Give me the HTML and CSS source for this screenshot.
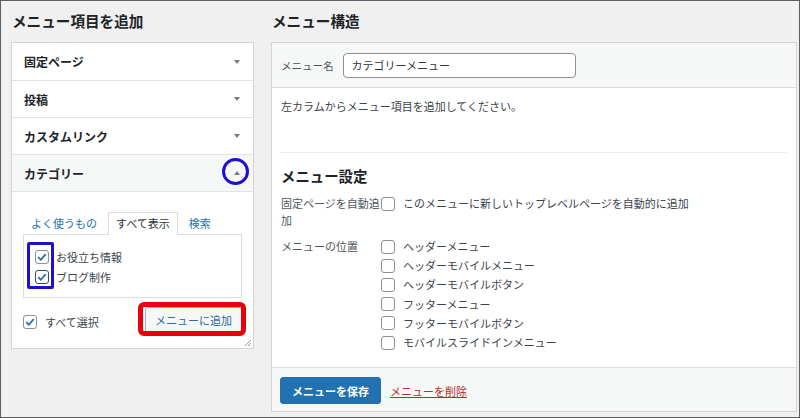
FILE: index.html
```html
<!DOCTYPE html>
<html lang="ja">
<head>
<meta charset="utf-8">
<title>メニュー</title>
<link rel="stylesheet" href="styles.css">
</head>
<body>
<div class="frame">
  <div class="col left">
    <h2 class="title">メニュー項目を追加</h2>
    <div class="acc">
      <div class="acc-row"><span>固定ページ</span><i class="arrow down"></i></div>
      <div class="acc-row"><span>投稿</span><i class="arrow down"></i></div>
      <div class="acc-row"><span>カスタムリンク</span><i class="arrow down"></i></div>
      <div class="acc-row open"><span>カテゴリー</span><i class="arrow up"></i><span class="mark-circle"></span></div>
      <div class="acc-body">
        <div class="tabs">
          <span class="tab">よく使うもの</span>
          <span class="tab active">すべて表示</span>
          <span class="tab">検索</span>
        </div>
        <div class="panel">
          <label class="chk-row"><span class="cb"><svg viewBox="0 0 14 14" width="12" height="12"><path d="M2.5 7.2 L5.6 10.2 L11.3 3.6" fill="none" stroke="#2271b1" stroke-width="2.1"/></svg></span>お役立ち情報</label>
          <label class="chk-row"><span class="cb focus"><svg viewBox="0 0 14 14" width="12" height="12"><path d="M2.5 7.2 L5.6 10.2 L11.3 3.6" fill="none" stroke="#2271b1" stroke-width="2.1"/></svg></span>ブログ制作</label>
          <span class="mark-rect"></span>
        </div>
        <div class="actions">
          <label class="chk-row"><span class="cb"><svg viewBox="0 0 14 14" width="12" height="12"><path d="M2.5 7.2 L5.6 10.2 L11.3 3.6" fill="none" stroke="#2271b1" stroke-width="2.1"/></svg></span>すべて選択</label>
          <span class="btn-wrap"><button class="btn-secondary">メニューに追加</button><span class="mark-red"></span></span>
        </div>
      </div>
      <svg class="grip" viewBox="0 0 8 8" width="8" height="8"><path d="M7 1 L1 7 M7 4 L4 7" stroke="#9a9a9a" stroke-width="1"/></svg>
    </div>
  </div>
  <div class="col right">
    <h2 class="title">メニュー構造</h2>
    <div class="menu-box">
      <div class="menu-head">
        <label class="name-label">メニュー名</label>
        <input class="name-input" type="text" value="カテゴリーメニュー">
      </div>
      <div class="menu-body">
        <p class="hint">左カラムからメニュー項目を追加してください。</p>
        <div class="settings">
          <h3 class="sub">メニュー設定</h3>
          <div class="set-row auto">
            <div class="set-label">固定ページを自動追加</div>
            <div class="set-opts">
              <label class="opt"><span class="cb"></span>このメニューに新しいトップレベルページを自動的に追加</label>
            </div>
          </div>
          <div class="set-row loc">
            <div class="set-label">メニューの位置</div>
            <div class="set-opts">
              <label class="opt"><span class="cb"></span>ヘッダーメニュー</label>
              <label class="opt"><span class="cb"></span>ヘッダーモバイルメニュー</label>
              <label class="opt"><span class="cb"></span>ヘッダーモバイルボタン</label>
              <label class="opt"><span class="cb"></span>フッターメニュー</label>
              <label class="opt"><span class="cb"></span>フッターモバイルボタン</label>
              <label class="opt"><span class="cb"></span>モバイルスライドインメニュー</label>
            </div>
          </div>
        </div>
      </div>
      <div class="menu-foot">
        <button class="btn-primary">メニューを保存</button>
        <a class="delete" href="#">メニューを削除</a>
      </div>
    </div>
  </div>
</div>
</body>
</html>
```

FILE: styles.css
```css
* { box-sizing: border-box; }
html, body { margin: 0; padding: 0; }
body {
  font-family: "Noto Sans CJK JP", "Noto Sans", sans-serif;
  font-size: 11px;
  color: #3c434a;
  background: #f0f0f1;
}
.frame {
  width: 800px;
  height: 418px;
  border: 1px solid #5e5e5e;
  background: #f0f0f1;
  padding: 10px 0 0 10px;
  display: flex;
  gap: 17px;
  align-items: flex-start;
  overflow: hidden;
}
.left { width: 243px; }
.right { width: 526px; }
.title {
  margin: 0 0 11px;
  padding-left: 1px;
  font-size: 14.6px;
  line-height: 20px;
  font-weight: 700;
  color: #1d2327;
}
.acc {
  position: relative;
  background: #fff;
  border: 1px solid #d3d4d6;
}
.acc-row {
  position: relative;
  height: 37px;
  border-bottom: 1px solid #e2e3e4;
  display: flex;
  align-items: center;
  justify-content: space-between;
  padding: 0 13px 0 12px;
  font-size: 12px;
  font-weight: 700;
  color: #1d2327;
}
.acc-row:first-child { height: 38px; }
.acc-row.open { background: #f6f7f7; }
.arrow {
  display: block;
  width: 0;
  height: 0;
  border-left: 3.5px solid transparent;
  border-right: 3.5px solid transparent;
}
.arrow.down { border-top: 4px solid #787c82; }
.arrow.up { border-bottom: 4px solid #787c82; }
.mark-circle {
  position: absolute;
  left: 210px;
  top: 3px;
  width: 27px;
  height: 27px;
  border: 3px solid #1f0fd0;
  border-radius: 50%;
}
.acc-body {
  padding: 20px 11px 15px;
}
.tabs {
  display: flex;
  gap: 3px;
  margin-bottom: -1px;
  position: relative;
  z-index: 1;
}
.tab {
  height: 23px;
  line-height: 21px;
  padding: 0 7px;
  border: 1px solid transparent;
  border-bottom: none;
  color: #2271b1;
}
.tab.active {
  border-color: #dcdcde;
  background: #fff;
  color: #2c3338;
}
.panel {
  position: relative;
  border: 1px solid #dcdcde;
  background: #fff;
  padding: 12px 11px 10px;
}
.chk-row {
  display: flex;
  align-items: center;
  height: 20px;
  color: #3c434a;
}
.cb {
  flex: none;
  display: inline-flex;
  align-items: center;
  justify-content: center;
  width: 14px;
  height: 14px;
  border: 1px solid #8c8f94;
  border-radius: 3px;
  background: #fff;
  margin-right: 7px;
}
.cb.focus { border-color: #3a4a6a; }
.mark-rect {
  position: absolute;
  left: 3px;
  top: 7px;
  width: 27px;
  height: 47px;
  border: 3px solid #1f0fd0;
  border-radius: 2px;
}
.actions {
  margin-top: 9px;
  display: flex;
  align-items: center;
  justify-content: space-between;
}
.actions .chk-row { margin-top: 3px; }
.actions .chk-row .cb { margin-right: 8px; }
.btn-wrap { position: relative; display: inline-block; }
.btn-secondary {
  display: block;
  height: 26px;
  padding: 0 9px;
  border: 1px solid #9bb4cc;
  border-radius: 3px;
  background: #f6f7f7;
  color: #2f6aa5;
  font-family: inherit;
  font-size: 11px;
}
.mark-red {
  position: absolute;
  left: -7px;
  top: -5px;
  width: 108px;
  height: 34px;
  border: 5px solid #e8000c;
  border-radius: 6px;
}
.grip {
  position: absolute;
  right: 1px;
  bottom: 1px;
}

/* right */
.menu-box {
  background: #fff;
  border: 1px solid #d3d4d6;
}
.menu-head {
  height: 45px;
  display: flex;
  align-items: center;
  gap: 9px;
  padding: 0 9px;
  background: #f6f7f7;
  border-bottom: 1px solid #dcdcde;
}
.name-label { color: #50575e; font-size: 10.5px; }
.name-input {
  width: 233px;
  height: 25px;
  border: 1px solid #8c8f94;
  border-radius: 4px;
  padding: 0 8px;
  background: #fff;
  font-family: inherit;
  font-size: 11px;
  color: #2c3338;
}
.menu-body {
  padding: 9px 9px 15px;
}
.hint {
  margin: 0;
  line-height: 18px;
}
.settings {
  margin-top: 37px;
  margin-left: -1px;
  padding-left: 1px;
  border-top: 1px solid #ececec;
  padding-top: 13px;
}
.sub {
  margin: 0 0 9px;
  font-size: 14.4px;
  line-height: 20px;
  font-weight: 700;
  color: #1d2327;
}
.set-row { display: flex; }
.set-label { width: 100px; flex: none; color: #50575e; }
.set-row.auto { line-height: 17px; }
.set-row.loc { margin-top: 8px; line-height: 19.2px; }
.opt {
  display: flex;
  align-items: center;
  color: #3c434a;
}
.set-row.auto .opt { height: 17px; }
.set-row.loc .opt { height: 19.2px; }
.opt .cb { margin-right: 8px; }
.menu-foot {
  border-top: 1px solid #dcdcde;
  background: #f6f7f7;
  padding: 9px 8px 7px;
  display: flex;
  align-items: center;
  gap: 9px;
}
.btn-primary {
  height: 27px;
  padding: 0 11px;
  border: 1px solid #2271b1;
  border-radius: 3px;
  background: #2271b1;
  color: #fff;
  font-family: inherit;
  font-size: 11px;
  font-weight: 700;
}
.delete {
  color: #b32d2e;
  text-decoration: underline;
  font-size: 11px;
}
```
